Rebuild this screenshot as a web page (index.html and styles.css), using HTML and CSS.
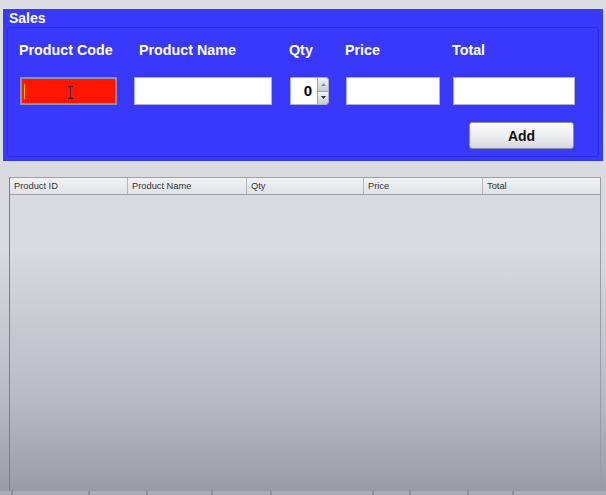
FILE: index.html
```html
<!DOCTYPE html>
<html>
<head>
<meta charset="utf-8">
<link rel="stylesheet" href="styles.css">
</head>
<body>
<div class="page">
  <section class="panel">
    <div class="panel-title">Sales</div>
    <div class="panel-inner">
      <div class="form">
        <label class="lbl l1">Product Code</label>
        <label class="lbl l2">Product Name</label>
        <label class="lbl l3">Qty</label>
        <label class="lbl l4">Price</label>
        <label class="lbl l5">Total</label>

        <div class="field red f1">
          <span class="caret"></span>
          <svg class="ibeam" width="7" height="13" viewBox="0 0 7 13"><path d="M1 0.5h5M1 12.5h5M3.5 0.5v12" stroke="#4a0000" stroke-width="1" fill="none"/></svg>
        </div>
        <div class="field f2"></div>
        <div class="spinner">
          <div class="spin-val">0</div>
          <div class="spin-btns">
            <div class="spin-btn"><svg width="5" height="3" viewBox="0 0 5 3"><path d="M2.5 0L5 3H0z" fill="#8a8f9a"/></svg></div>
            <div class="spin-btn"><svg width="5" height="3" viewBox="0 0 5 3"><path d="M0 0h5L2.5 3z" fill="#2c3140"/></svg></div>
          </div>
        </div>
        <div class="field f4"></div>
        <div class="field f5"></div>

        <button class="add-btn">Add</button>
      </div>
    </div>
  </section>

  <section class="table-wrap">
    <div class="thead">
      <div class="th">Product ID</div>
      <div class="th">Product Name</div>
      <div class="th">Qty</div>
      <div class="th">Price</div>
      <div class="th last">Total</div>
    </div>
    <div class="tbody"></div>
  </section>

  <div class="taskbar">
    <span class="seg s1"></span><span class="seg s2"></span><span class="seg s3"></span><span class="seg s4"></span><span class="seg s5"></span><span class="seg s6"></span><span class="seg s7"></span><span class="seg s8"></span><span class="seg s9"></span><span class="seg s10"></span>
  </div>
</div>
</body>
</html>
```
FILE: styles.css
```css
* { box-sizing: border-box; }
html, body { margin: 0; padding: 0; }
body {
  width: 606px;
  height: 495px;
  overflow: hidden;
  font-family: "Liberation Sans", Arial, sans-serif;
  background: linear-gradient(to bottom, #dcdde2 0px, #d9dadf 250px, #b9bac3 400px, #9a9ba4 490px);
}
.page {
  display: flex;
  flex-direction: column;
  height: 495px;
  padding-top: 9px;
}
.panel {
  margin: 0 3px;
  height: 152px;
  background: #3939fd;
  padding: 0 4px 4px 4px;
  display: flex;
  flex-direction: column;
}
.panel-title {
  height: 18px;
  line-height: 18px;
  padding-left: 2px;
  color: #ffffff;
  font-weight: bold;
  font-size: 14px;
}
.panel-inner {
  flex: 1;
  border: 1px solid #2c2cd8;
  border-radius: 3px;
  padding: 14px 0 7px 12px;
}
.form {
  display: grid;
  grid-template-columns: 114px 156px 56px 107px 122px;
  grid-template-rows: 17px 46px 44px;
}
.lbl {
  color: #ffffff;
  font-weight: bold;
  font-size: 14.3px;
  line-height: 17px;
  white-space: nowrap;
  grid-row: 1;
}
.l1 { grid-column: 1; margin-left: -1px; }
.l2 { grid-column: 2; margin-left: 5px; }
.l3 { grid-column: 3; margin-left: -1px; }
.l4 { grid-column: 4; margin-left: -1px; }
.l5 { grid-column: 5; margin-left: -1px; }

.field {
  grid-row: 2;
  align-self: end;
  height: 28px;
  background: #ffffff;
  border: 1px solid #aab0d0;
  position: relative;
}
.f1 { grid-column: 1; width: 97px; }
.f2 { grid-column: 2; width: 138px; }
.f4 { grid-column: 4; width: 94px; }
.f5 { grid-column: 5; width: 122px; }
.field.red {
  background: #ff1500;
  border: 2px solid #8f91b8;
}
.caret {
  position: absolute;
  left: 2px;
  top: 5px;
  width: 1px;
  height: 15px;
  background: #e8b800;
}
.ibeam {
  position: absolute;
  left: 45px;
  top: 7px;
}
.spinner {
  grid-row: 2;
  grid-column: 3;
  align-self: end;
  width: 39px;
  height: 28px;
  display: flex;
  border: 1px solid #aab0d0;
  border-radius: 0 3px 3px 0;
  overflow: hidden;
}
.spin-val {
  width: 26px;
  background: #ffffff;
  font-weight: bold;
  font-size: 15px;
  line-height: 26px;
  text-align: right;
  padding-right: 5px;
  color: #000;
}
.spin-btns {
  flex: 1;
  display: flex;
  flex-direction: column;
}
.spin-btn {
  flex: 1;
  display: flex;
  align-items: center;
  justify-content: center;
  background: linear-gradient(to bottom, #f2f3f6, #c9ccd4);
  border-left: 1px solid #9ea3b3;
}
.spin-btn + .spin-btn { border-top: 1px solid #9ea3b3; }

.add-btn {
  grid-row: 3;
  grid-column: 5;
  justify-self: end;
  align-self: end;
  margin-right: 1px;
  width: 105px;
  height: 27px;
  border: 1px solid #8d909c;
  border-radius: 3px;
  background: linear-gradient(to bottom, #fbfbfc 0%, #eeeff2 50%, #d5d7dd 100%);
  font-family: "Liberation Sans", Arial, sans-serif;
  font-weight: bold;
  font-size: 14px;
  color: #111;
  padding: 0;
}

.table-wrap {
  margin: 16px 5px 0 9px;
  flex: 1;
  display: flex;
  flex-direction: column;
  border-left: 1px solid #7e7f86;
  border-right: 1px solid #9a9ba3;
  border-top: 1px solid #9fa1a8;
}
.thead {
  display: grid;
  grid-template-columns: 118px 119px 117px 119px 1fr;
  height: 17px;
  background: linear-gradient(to bottom, #f1f2f5, #e1e2e7);
  border-bottom: 1px solid #9fa1a8;
}
.th {
  font-size: 9.3px;
  line-height: 16px;
  color: #333;
  padding-left: 4px;
  border-right: 1px solid #b4b6bd;
  white-space: nowrap;
}
.th.last { border-right: none; }
.tbody { flex: 1; }

.taskbar {
  height: 4px;
  display: flex;
  gap: 2px;
  background: #8e8f97;
}
.seg { background: #abacb3; height: 4px; }
.s1 { width: 11px; }
.s2 { width: 75px; }
.s3 { width: 56px; }
.s4 { width: 63px; }
.s5 { width: 57px; }
.s6 { width: 100px; }
.s7 { width: 35px; }
.s8 { width: 56px; }
.s9 { width: 43px; }
.s10 { flex: 1; }
```
